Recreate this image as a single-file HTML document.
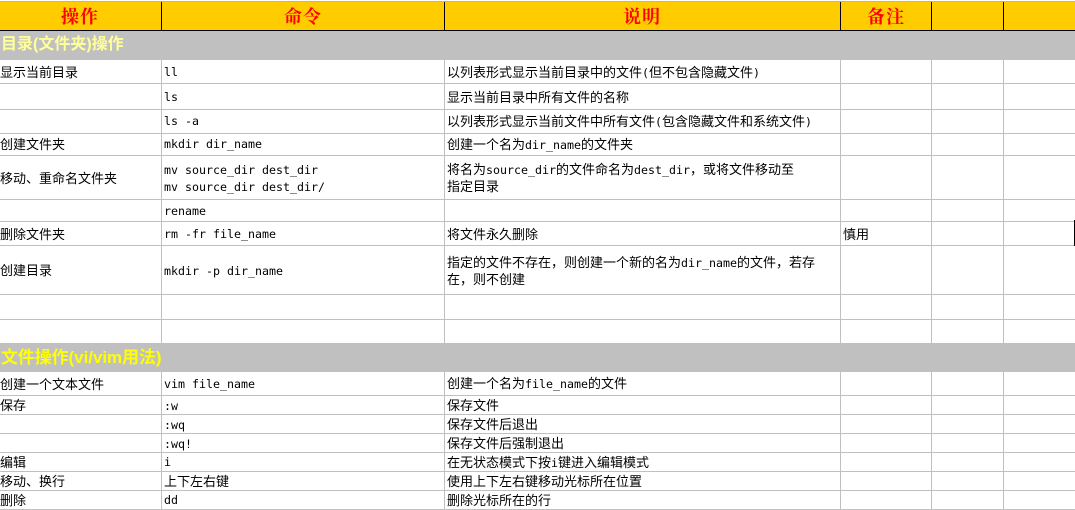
<!DOCTYPE html>
<html lang="zh-CN">
<head>
<meta charset="utf-8">
<title>Linux命令</title>
<style>
html,body{margin:0;padding:0;background:#fff}
body{position:relative;width:1075px;height:510px;overflow:hidden;font-family:"WenQuanYi Zen Hei","Noto Sans CJK SC",sans-serif;font-size:13px;color:#000}
div{position:absolute}
.h{left:0;width:1075px;height:1px;background:#c0c0c0}
.v{width:1px;background:#c0c0c0}
.k{width:1px;background:#000}
.s{left:0;width:1075px;height:29px;background:#c0c0c0}
.t{white-space:nowrap;line-height:16px;height:16px}
.m,.t i{font-family:"DejaVu Sans Mono","Liberation Mono",monospace;font-size:11.63px;font-style:normal}
.c1{left:0}.c2{left:164px}.c3{left:447px}.c4{left:843px}
.hd{white-space:nowrap;font-family:"Liberation Serif","Noto Serif CJK SC",serif;font-weight:700;font-size:18px;line-height:24px;height:24px;color:#f00;top:4px;letter-spacing:1px}
.sec{left:1px;white-space:nowrap;font-family:"Liberation Sans","Noto Sans CJK SC",sans-serif;font-weight:700;font-size:16px;line-height:20px;height:20px}
</style>
</head>
<body>
<div class="h" style="top:1px;height:1px;background:#b4b4b4"></div>
<div style="left:0;top:2px;width:1075px;height:28px;background:#ffcc00"></div>
<div style="left:0;top:30px;width:1075px;height:1px;background:#000"></div>
<div class="s" style="top:31px"></div>
<div class="s" style="top:343px"></div>

<div class="k" style="left:161px;top:2px;height:28px"></div>
<div class="k" style="left:444px;top:2px;height:28px"></div>
<div class="k" style="left:840px;top:2px;height:28px"></div>
<div class="k" style="left:931px;top:2px;height:28px"></div>
<div class="k" style="left:1003px;top:2px;height:28px"></div>

<div class="v" style="left:161px;top:60px;height:283px"></div>
<div class="v" style="left:444px;top:60px;height:283px"></div>
<div class="v" style="left:840px;top:60px;height:283px"></div>
<div class="v" style="left:931px;top:60px;height:283px"></div>
<div class="v" style="left:1003px;top:60px;height:283px"></div>
<div class="v" style="left:161px;top:372px;height:138px"></div>
<div class="v" style="left:444px;top:372px;height:138px"></div>
<div class="v" style="left:840px;top:372px;height:138px"></div>
<div class="v" style="left:931px;top:372px;height:138px"></div>
<div class="v" style="left:1003px;top:372px;height:138px"></div>

<div class="h" style="top:83px"></div>
<div class="h" style="top:109px"></div>
<div class="h" style="top:133px"></div>
<div class="h" style="top:155px"></div>
<div class="h" style="top:199px"></div>
<div class="h" style="top:221px"></div>
<div class="h" style="top:245px"></div>
<div class="h" style="top:294px"></div>
<div class="h" style="top:319px"></div>
<div class="h" style="top:395px"></div>
<div class="h" style="top:414px"></div>
<div class="h" style="top:433px"></div>
<div class="h" style="top:452px"></div>
<div class="h" style="top:471px"></div>
<div class="h" style="top:490px"></div>
<div class="h" style="top:509px"></div>
<div class="k" style="left:1074px;top:220px;height:26px"></div>

<div class="hd" style="left:61px;top:5px">操作</div>
<div class="hd" style="left:284px;top:5px">命令</div>
<div class="hd" style="left:623px;top:5px">说明</div>
<div class="hd" style="left:867px;top:5px">备注</div>

<div class="sec" style="top:35px;color:#ffff99">目录(文件夹)操作</div>
<div class="sec" style="top:348px;color:#ffff00;font-size:16.9px">文件操作(vi/vim用法)</div>

<div class="t c1" style="top:64px">显示当前目录</div>
<div class="t c2 m" style="top:64px">ll</div>
<div class="t c3" style="top:64px">以列表形式显示当前目录中的文件<i>(</i>但不包含隐藏文件<i>)</i></div>

<div class="t c2 m" style="top:89px">ls</div>
<div class="t c3" style="top:89px">显示当前目录中所有文件的名称</div>

<div class="t c2 m" style="top:113px">ls -a</div>
<div class="t c3" style="top:113px">以列表形式显示当前文件中所有文件<i>(</i>包含隐藏文件和系统文件<i>)</i></div>

<div class="t c1" style="top:136px">创建文件夹</div>
<div class="t c2 m" style="top:136px">mkdir dir_name</div>
<div class="t c3" style="top:136px">创建一个名为<i>dir_name</i>的文件夹</div>

<div class="t c1" style="top:170px">移动、重命名文件夹</div>
<div class="t c2 m" style="top:162px">mv source_dir dest_dir</div>
<div class="t c2 m" style="top:179px">mv source_dir dest_dir/</div>
<div class="t c3" style="top:161px">将名为<i>source_dir</i>的文件命名为<i>dest_dir</i>，或将文件移动至</div>
<div class="t c3" style="top:178px">指定目录</div>

<div class="t c2 m" style="top:203px">rename</div>

<div class="t c1" style="top:226px">删除文件夹</div>
<div class="t c2 m" style="top:226px">rm -fr file_name</div>
<div class="t c3" style="top:226px">将文件永久删除</div>
<div class="t c4" style="top:226px">慎用</div>

<div class="t c1" style="top:262px">创建目录</div>
<div class="t c2 m" style="top:263px">mkdir -p dir_name</div>
<div class="t c3" style="top:254px">指定的文件不存在，则创建一个新的名为<i>dir_name</i>的文件，若存</div>
<div class="t c3" style="top:271px">在，则不创建</div>

<div class="t c1" style="top:376px">创建一个文本文件</div>
<div class="t c2 m" style="top:376px">vim file_name</div>
<div class="t c3" style="top:375px">创建一个名为<i>file_name</i>的文件</div>

<div class="t c1" style="top:397px">保存</div>
<div class="t c2 m" style="top:398px">:w</div>
<div class="t c3" style="top:397px">保存文件</div>

<div class="t c2 m" style="top:417px">:wq</div>
<div class="t c3" style="top:416px">保存文件后退出</div>

<div class="t c2 m" style="top:436px">:wq!</div>
<div class="t c3" style="top:435px">保存文件后强制退出</div>

<div class="t c1" style="top:454px">编辑</div>
<div class="t c2 m" style="top:454px">i</div>
<div class="t c3" style="top:454px">在无状态模式下按<i>i</i>键进入编辑模式</div>

<div class="t c1" style="top:473px">移动、换行</div>
<div class="t c2" style="top:473px">上下左右键</div>
<div class="t c3" style="top:473px">使用上下左右键移动光标所在位置</div>

<div class="t c1" style="top:492px">删除</div>
<div class="t c2 m" style="top:492px">dd</div>
<div class="t c3" style="top:492px">删除光标所在的行</div>
</body>
</html>
